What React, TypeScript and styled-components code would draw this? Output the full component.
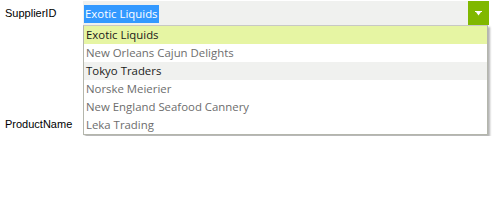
import React from "react";
import styled, { createGlobalStyle } from "styled-components";

const GlobalStyle = createGlobalStyle`
  body {
    margin: 0;
    background: #ffffff;
    font-family: "Liberation Sans", Arial, sans-serif;
  }
`;

const suppliers = [
  "Exotic Liquids",
  "New Orleans Cajun Delights",
  "Tokyo Traders",
  "Norske Meierier",
  "New England Seafood Cannery",
  "Leka Trading",
];

const Form = styled.div`
  display: flex;
  flex-direction: column;
  padding-top: 1px;
`;

const Row = styled.div<{ $height: number }>`
  display: flex;
  align-items: center;
  height: ${(p) => p.$height}px;
`;

const Label = styled.label`
  width: 83px;
  padding-left: 5px;
  box-sizing: border-box;
  font-size: 11px;
  color: #000;
`;

const ComboWrap = styled.div`
  position: relative;
  width: 406px;
`;

const Combo = styled.div`
  display: flex;
  align-items: center;
  height: 24px;
  background: #f0f1ef;
`;

const ComboText = styled.div`
  flex: 1;
  padding-left: 1px;
  font-family: "Open Sans", "Noto Sans", sans-serif;
  font-size: 11.4px;

  span {
    background: #3399ff;
    color: #fff;
    padding: 1px 1px 2px;
  }
`;

const Arrow = styled.div`
  width: 21px;
  height: 24px;
  background: #80b800;
  display: flex;
  align-items: center;
  justify-content: center;
`;

const List = styled.ul`
  position: absolute;
  top: 24px;
  left: 0;
  width: 405px;
  margin: 0;
  padding: 0;
  list-style: none;
  background: #fff;
  border: 1px solid #b4b6ac;
  border-top-color: #c8c9c4;
  box-sizing: border-box;
  box-shadow: 2px 2px 2px rgba(0, 0, 0, 0.3);
`;

const Item = styled.li<{ $bg: string; $dark?: boolean }>`
  height: 18px;
  line-height: 18px;
  padding-left: 2px;
  background: ${(p) => p.$bg};
  color: ${(p) => (p.$dark ? "#1a1a1a" : "#6d6d6d")};
  font-family: "Open Sans", "Noto Sans", sans-serif;
  font-size: 11.4px;
  white-space: nowrap;
`;

export default function App() {
  return (
    <>
      <GlobalStyle />
      <Form>
        <Row $height={24}>
          <Label>SupplierID</Label>
          <ComboWrap>
            <Combo>
              <ComboText>
                <span>Exotic Liquids</span>
              </ComboText>
              <Arrow>
                <svg width="7" height="5" viewBox="0 0 7 5">
                  <rect x="0" y="0" width="7" height="1" fill="#fff" />
                  <path d="M1 1 H6 L3.5 4.5 Z" fill="#fff" />
                </svg>
              </Arrow>
            </Combo>
            <List>
              {suppliers.map((s, i) => (
                <Item
                  key={s}
                  $bg={i === 0 ? "#e6f5a3" : i === 2 ? "#f0f1ef" : "#ffffff"}
                  $dark={i === 0 || i === 2}
                >
                  {s}
                </Item>
              ))}
            </List>
          </ComboWrap>
        </Row>
        <Row $height={87} />
        <Row $height={24}>
          <Label>ProductName</Label>
        </Row>
      </Form>
    </>
  );
}
